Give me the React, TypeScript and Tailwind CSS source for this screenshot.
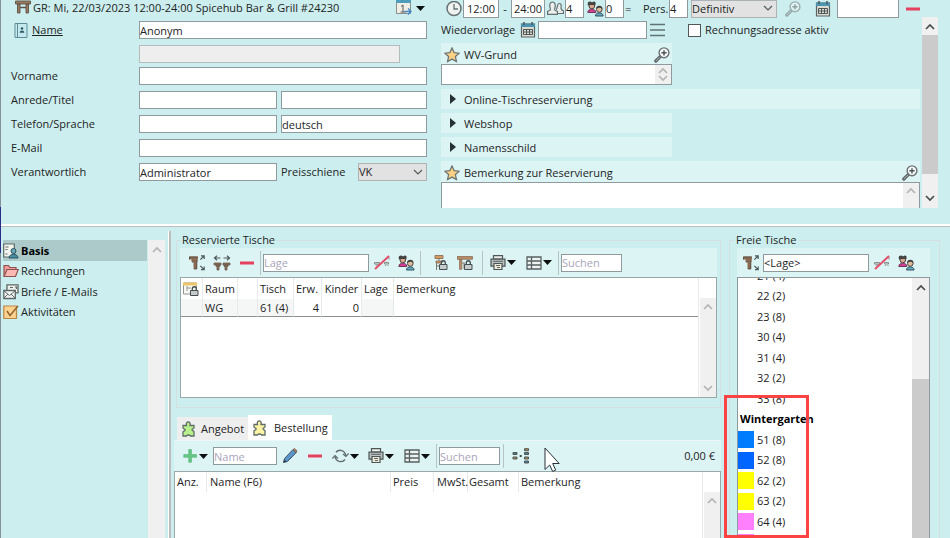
import React from 'react';
import { clsx } from 'clsx';

const field =
  'h-[18px] min-w-0 border border-[#8f9a9e] bg-white text-[11px] leading-4 text-[#1c2424] outline-none placeholder:text-[#a9a5bb]';

type IconProps = { className?: string };

function Svg({ children, className, w = 16, h = 16 }: { children: React.ReactNode; className?: string; w?: number; h?: number }) {
  return (
    <svg width={w} height={h} viewBox={`0 0 ${w} ${h}`} fill="none" className={clsx('shrink-0', className)} aria-hidden="true">
      {children}
    </svg>
  );
}

function Triangle() {
  return (
    <Svg w={9} h={5}>
      <path d="M0 0h9L4.500 5z" fill="#0c0f0f" />
    </Svg>
  );
}

function Chevron({ up = false, color = '#b4b4b4' }: { up?: boolean; color?: string }) {
  return (
    <Svg w={10} h={7}>
      <path d={up ? 'M1 6l4-4 4 4' : 'M1 1l4 4 4-4'} stroke={color} strokeWidth="1.700" />
    </Svg>
  );
}

function TableIcon({ className }: IconProps) {
  return (
    <Svg className={className}>
      <path d="M.5 1h15v3H.5zM2.500 4h2.500v9H2.500zM11 4h2.500v9H11z" fill="#9a7a5c" stroke="#5d5148" strokeWidth=".9" />
      <path d="M5 7.500h6" stroke="#5d5148" strokeWidth="1.500" />
    </Svg>
  );
}

function AddressBook() {
  return (
    <Svg w={14} h={15}>
      <path d="M1 .5h12v14H1z" fill="#c5e8ee" stroke="#5d8e98" />
      <path d="M3.500 1v13" stroke="#5d8e98" />
      <circle cx="8" cy="5.500" r="1.300" fill="#2d5964" />
      <path d="M5.700 9.800c0-3 4.600-3 4.600 0z" fill="#2d5964" />
    </Svg>
  );
}

function CalendarNext() {
  return (
    <Svg>
      <path d="M.5 1h14v12.500H.5z" fill="#f1efe5" stroke="#8b8f8c" />
      <path d="M0 0h15v3H0z" fill="#4f9dbb" />
      <path d="M5 6.500l2-1.500v7M4.500 12h5" stroke="#55595a" />
      <path d="M8.500 11.500h6.500M12 8.500l3 3-3 3" stroke="#4286c6" strokeWidth="1.300" />
    </Svg>
  );
}

function CalendarIcon() {
  return (
    <Svg>
      <path d="M1.500 2h13v13h-13z" fill="#dcdcd3" stroke="#5a6465" strokeWidth="1.200" />
      <path d="M1 1.500h14V5H1z" fill="#4b93b0" />
      <path d="M4 0v3M12 0v3" stroke="#4d5657" strokeWidth="1.500" />
      <path d="M3.500 7.500h9v5h-9zM3.500 10h9M6.500 7.500v5M9.500 7.500v5" stroke="#4d5657" />
    </Svg>
  );
}

function ClockIcon() {
  return (
    <Svg>
      <circle cx="8" cy="7.500" r="7" fill="#eef3f2" stroke="#687174" strokeWidth="1.500" />
      <path d="M8 3v5h4" stroke="#687174" strokeWidth="1.300" />
    </Svg>
  );
}

function PeopleIcon() {
  return (
    <Svg w={17}>
      <path d="M9 8.500c2-1 1-6 3-6s2.500 1.500 2 4c-.3 1.500 0 2.500 2.500 3.500v2.500H11" fill="#e9eeed" stroke="#656e70" strokeWidth="1.200" />
      <path d="M.6 13.400v-3c2.500-1 3.400-1.400 2.600-3C2 4 3 1 5.500 1S9 4 7.800 7.400c-.8 1.600.1 2 2.600 3v3z" fill="#e9eeed" stroke="#656e70" strokeWidth="1.200" />
    </Svg>
  );
}

function KidsIcon() {
  return (
    <Svg w={17}>
      <path d="M1 4.500c-1.500-4 2.500-5 4-3C7.500-.5 9.500 1 8.200 4.500z" fill="#40413f" />
      <circle cx="4.800" cy="5" r="2.800" fill="#dca890" stroke="#4b4543" />
      <path d="M.8 11.500c0-4.500 8-4.500 8 0z" fill="#d63c93" stroke="#6b3a58" />
      <path d="M2 4c1.500-2.500 4.500-2.500 5.800 0z" fill="#40413f" />
      <circle cx="12.300" cy="8.500" r="2.800" fill="#deb99a" stroke="#4b4543" />
      <path d="M8.500 15c0-4.200 7.600-4.200 7.600 0z" fill="#62a9c2" stroke="#34525e" />
      <path d="M9 8c-.3-4.500 6.900-4.500 6.600 0-1.500-1.500-4.500-1.800-6.600 0z" fill="#40413f" />
    </Svg>
  );
}

function ZoomIcon({ className }: IconProps) {
  return (
    <Svg className={className}>
      <path d="M6 9.800L1.800 14" stroke="#5c6466" strokeWidth="3.200" strokeLinecap="round" />
      <path d="M5.500 10.300L2 13.800" stroke="#b3bbbb" strokeWidth="1" strokeLinecap="round" />
      <circle cx="10" cy="5.800" r="4.900" fill="#f4f8f8" stroke="#6a7274" strokeWidth="1.400" />
      <path d="M10 3.200v5.200M7.400 5.800h5.200" stroke="#4c5456" strokeWidth="1.400" />
    </Svg>
  );
}

function StarIcon() {
  return (
    <Svg>
      <path d="M8 1l2.100 4.600 5 .6-3.700 3.400 1 5L8 12.100l-4.400 2.500 1-5L.9 6.200l5-.6z" fill="#fdd183" stroke="#6d7674" strokeWidth="1.300" />
    </Svg>
  );
}

function MinusIcon() {
  return (
    <Svg>
      <path d="M1 6.500h14v3H1z" fill="#e5405d" />
    </Svg>
  );
}

function LinesIcon() {
  return (
    <Svg>
      <path d="M0 2.500h15M0 8h15M0 13.500h15" stroke="#5f7475" strokeWidth="1.300" />
    </Svg>
  );
}

function TableMoveIcon() {
  return (
    <Svg>
      <path d="M0 1.500h9v3H0zM2.500 4.500h6v2.500h-6zM4.500 6h3.500v8H4.500z" fill="#8a6b52" />
      <path d="M.5 4.500V2h8M3 7h2M5 14h2.800V5" stroke="#5b5049" strokeWidth=".9" />
      <path d="M11.300 4.700L15 1M12 .8h3.200V4M11.300 10.800L15 14.500M12 14.700h3.200v-3.200" stroke="#4d595a" strokeWidth="1.200" />
    </Svg>
  );
}

function TableJoinIcon() {
  return (
    <Svg w={18}>
      <path d="M1.500 3h6M4 .8L1.500 3 4 5.200M10.500 3h6M14 .8L16.500 3 14 5.200" stroke="#4d595a" strokeWidth="1.200" />
      <path d="M1 8h7v2H1zM3 10h4v1.500H6V15H4v-3.500H3zM10 8h7v2h-7zM11 10h4v1.500h-1V15h-2v-3.500h-1z" fill="#8a6b52" stroke="#6b5c50" strokeWidth=".8" />
    </Svg>
  );
}

function SlashIcon() {
  return (
    <Svg>
      <path d="M.5 7.500h5v1.500h-5zM1.500 10h3M10.500 7.500h4v1.500h-4zM11 10.500h1M13.500 10.500h1M15 4.500V2" stroke="#80857f" strokeWidth=".9" />
      <path d="M1 14L15 1" stroke="#e34b66" strokeWidth="1.800" />
    </Svg>
  );
}

function Lock() {
  return (
    <>
      <path d="M9.300 9.500V8c0-3 4-3 4 0v1.500" stroke="#454e50" strokeWidth="1.300" />
      <path d="M7.500 9.500h7.500v5H7.500z" fill="#c6cbcb" stroke="#454e50" />
    </>
  );
}

function ChairLockIcon() {
  return (
    <Svg>
      <path d="M3 .5h8v3H3zM4 6h6v2H4z" fill="#d59b62" stroke="#85674b" strokeWidth=".8" />
      <path d="M7 3.500V6M4.500 8v7M4.500 11h3" stroke="#7d756c" />
      <Lock />
    </Svg>
  );
}

function TableLockIcon() {
  return (
    <Svg>
      <path d="M0 1.500h15.500v2.800H0zM2.500 4.300h2.300v10H2.500z" fill="#ba8c66" stroke="#8a705a" strokeWidth=".8" />
      <path d="M5 8h3M7 8v6" stroke="#8a7d70" />
      <Lock />
    </Svg>
  );
}

function PrinterIcon() {
  return (
    <Svg>
      <path d="M3.500 .7h9V4h-9z" fill="#f0f1ec" stroke="#4d5657" strokeWidth="1.200" />
      <path d="M1 4.200h14v7H1z" fill="#b9c0be" stroke="#4d5657" strokeWidth="1.200" />
      <path d="M4 8.500h8V14.500H4z" fill="#f0ecdc" stroke="#4d5657" strokeWidth="1.200" />
      <path d="M3 6.300h10M6 10.500h4M7 12.500h3" stroke="#5d6667" />
    </Svg>
  );
}

function GridIcon() {
  return (
    <Svg>
      <path d="M1 2h14v12H1zM1 6h14M1 10h14M5.500 2v12" fill="#eef2f0" stroke="#566061" strokeWidth="1.300" />
    </Svg>
  );
}

function SheetLockIcon() {
  return (
    <Svg>
      <path d="M.5 2h13v11H.5z" fill="#fafaf5" stroke="#8e9491" />
      <path d="M0 1.500h14V4.500H0z" fill="#ecc469" />
      <path d="M4 5v5M4 7h4" stroke="#8e9491" />
      <Lock />
    </Svg>
  );
}

function PuzzleIcon({ color }: { color: string }) {
  return (
    <Svg>
      <path
        d="M2 4.500h3.500C4 -.3 10.500 -.3 9 4.500h4v2.500c-.5.800-2 .3-2 1.700s1.500 1 2 1.800v4.500H9.500c-.6-.8-.5-1-2-1s-1.500.2-2 1H2v-4c.5-1 2.200-.6 2.200-2S2.500 8 2 7z"
        fill={color}
        stroke="#5f6d68"
        strokeWidth="1.300"
      />
    </Svg>
  );
}

function PlusIcon() {
  return (
    <Svg>
      <path d="M6.700 1.500h2.800v5h5v2.800h-5v5H6.700v-5h-5V6.500h5z" fill="#64c684" stroke="#4da86c" strokeWidth=".5" />
    </Svg>
  );
}

function PencilIcon() {
  return (
    <Svg>
      <path d="M1.500 14.500l1-4 8.500-9 3.300 3-8.800 9z" fill="#5a94c8" stroke="#3f5568" />
      <path d="M11 1.500l1.500-1 2.500 2.300-.9 1.700z" fill="#b78358" stroke="#6a5342" strokeWidth=".7" />
      <path d="M1.500 14.500l1-3 2 2z" fill="#333c41" />
    </Svg>
  );
}

function RefreshIcon() {
  return (
    <Svg w={17}>
      <path d="M4 4.200c3-3.500 9-2 9.700 3.300M13 11.500c-3 3.800-9.300 2.200-9.900-3" stroke="#5d696b" strokeWidth="1.400" />
      <path d="M11 6l2.900 2.500L16.700 5.500M.3 10.500L3 7.500l3 3" stroke="#5d696b" strokeWidth="1.200" />
    </Svg>
  );
}

function SplitIcon() {
  return (
    <Svg w={18}>
      <path d="M1 4.500h4v2H1zM12.500 4.500h4v2h-4zM12.500 13h4v2h-4z" fill="#5a7f8c" stroke="#4b5658" />
      <path d="M1 9h4v2H1zM12.500 .7h4v2h-4zM12.500 9h4v2h-4z" fill="#b98b4c" stroke="#4b5658" />
      <path d="M7.700 7h2v2h-2z" fill="#3c4547" />
    </Svg>
  );
}

function ProfileIcon() {
  return (
    <Svg>
      <path d="M.7 1h10.600v13H.7z" fill="#f3f4ee" stroke="#5e6867" strokeWidth="1.200" />
      <path d="M2.500 4h3M2.500 6.500h2M2.500 11h2" stroke="#5e6867" strokeWidth="1.200" />
      <circle cx="10.500" cy="8" r="2.500" fill="#68a9bd" stroke="#32535f" />
      <path d="M6 15c0-5 9-5 9 0z" fill="#468da3" stroke="#32535f" />
    </Svg>
  );
}

function FolderIcon() {
  return (
    <Svg>
      <path d="M1 13V2.500h4.500l1.500 2h6V7" fill="#f29a97" stroke="#8b5450" strokeWidth="1.200" />
      <path d="M1 13.500L4 6.500h11.300l-2.800 7z" fill="#fcb8b3" stroke="#8b5450" strokeWidth="1.200" />
    </Svg>
  );
}

function LettersIcon() {
  return (
    <Svg>
      <path d="M4 .8h11v8H4z" fill="#eef0ec" stroke="#5d6767" strokeWidth="1.300" />
      <path d="M7 3.500h3M12 3h1.500v2" stroke="#5d6767" strokeWidth="1.200" />
      <path d="M.8 6.500h11.500v8H.8z" fill="#f5f6f3" stroke="#5d6767" strokeWidth="1.300" />
      <path d="M1 7l5.500 4.500L12 7M1 14l4-4M12 14l-4-4" stroke="#5d6767" />
    </Svg>
  );
}

function TaskIcon() {
  return (
    <Svg>
      <path d="M.8 2h12.700v12.500H.8z" fill="#fdd18e" stroke="#ba8645" strokeWidth="1.200" />
      <path d="M4 7l3 4.500L15 2" stroke="#8f6434" strokeWidth="1.500" />
    </Svg>
  );
}

function IconButton({ label, children }: { label: string; children: React.ReactNode }) {
  return (
    <button type="button" aria-label={label} className="flex h-6 w-[25px] shrink-0 items-center justify-center">
      {children}
    </button>
  );
}

function MenuButton({ label, children }: { label: string; children: React.ReactNode }) {
  return (
    <button type="button" aria-label={label} className="flex h-6 w-[36px] shrink-0 items-center justify-center gap-px">
      {children}
      <Triangle />
    </button>
  );
}

function Separator() {
  return <div className="mr-0.5 ml-px h-6 w-px shrink-0 bg-[#b5c4c5]" />;
}

function Select({ label, value, className }: { label: string; value: string; className: string }) {
  return (
    <div className={clsx('relative flex h-[18px] shrink-0 items-center', className)}>
      <select aria-label={label} className="h-full w-full appearance-none border border-[#adb3b4] bg-[#e2e2e2] text-[11px] leading-4 text-[#1c2424]">
        <option>{value}</option>
      </select>
      <div className="pointer-events-none absolute right-1">
        <Svg w={10} h={7}>
          <path d="M1 1l4 4 4-4" stroke="#555b5c" strokeWidth="1.200" />
        </Svg>
      </div>
    </div>
  );
}

function FormRow({ id, label, children }: { id: string; label: React.ReactNode; children: React.ReactNode }) {
  return (
    <div className="flex h-[18px] items-center">
      <label htmlFor={id} className="w-32 shrink-0">
        {label}
      </label>
      <div className="flex flex-1 items-center gap-1">{children}</div>
    </div>
  );
}

function CustomerForm() {
  return (
    <section className="w-[426px] shrink-0 pl-2.5">
      <header className="flex h-4 items-center gap-0.5 pl-1">
        <TableIcon />
        <h1 className="flex-1 whitespace-nowrap">GR: Mi, 22/03/2023 12:00-24:00 Spicehub Bar &amp; Grill #24230</h1>
        <button type="button" aria-label="Datum ändern" className="flex items-center gap-1 pr-0.5">
          <CalendarNext />
          <Triangle />
        </button>
      </header>
      <form className="flex flex-col gap-1 pt-[5px]">
        <div className="flex flex-col gap-1.5">
          <FormRow
            id="name"
            label={
              <span className="flex items-center gap-1 pl-[3px]">
                <AddressBook />
                <span className="underline">Name</span>
              </span>
            }
          >
            <input id="name" defaultValue="Anonym" className={clsx(field, 'flex-1')} />
          </FormRow>
          <FormRow id="zusatz" label="">
            <input id="zusatz" disabled aria-label="Namenszusatz" className="mr-[27px] h-[18px] min-w-0 flex-1 border border-[#b5bcbd] bg-[#eeeeee]" />
          </FormRow>
        </div>
        <div className="flex flex-col gap-1.5">
          <FormRow id="vorname" label="Vorname">
            <input id="vorname" className={clsx(field, 'flex-1')} />
          </FormRow>
          <FormRow id="anrede" label="Anrede/Titel">
            <input id="anrede" className={clsx(field, 'w-[138px]')} />
            <input aria-label="Titel" className={clsx(field, 'flex-1')} />
          </FormRow>
          <FormRow id="telefon" label="Telefon/Sprache">
            <input id="telefon" className={clsx(field, 'w-[138px]')} />
            <input aria-label="Sprache" defaultValue="deutsch" className={clsx(field, 'flex-1')} />
          </FormRow>
          <FormRow id="email" label="E-Mail">
            <input id="email" type="email" className={clsx(field, 'flex-1')} />
          </FormRow>
          <FormRow id="verantwortlich" label="Verantwortlich">
            <input id="verantwortlich" defaultValue="Administrator" className={clsx(field, 'w-[138px]')} />
            <span className="flex-1">Preisschiene</span>
            <Select label="Preisschiene" value="VK" className="w-[69px]" />
          </FormRow>
        </div>
      </form>
    </section>
  );
}

function ScrollBox({ id, cut = false }: { id: string; cut?: boolean }) {
  return (
    <div className={clsx('flex border border-[#8f9a9e] bg-white', cut ? 'h-[26px] border-b-0' : 'h-[21px]')}>
      <textarea id={id} className="min-w-0 flex-1 resize-none overflow-hidden px-px text-[11px] outline-none" />
      <div className={clsx('flex w-4 flex-col items-center justify-between bg-[#f0f0f0]', cut ? 'pt-1' : 'py-0.5')}>
        <Chevron up />
        {!cut && <Chevron />}
      </div>
    </div>
  );
}

function StarBand({ id, label }: { id: string; label: string }) {
  return (
    <div className="flex h-[21px] items-center gap-1 bg-[#dcf4f4] pt-0.5 pr-0.5 pl-[3px]">
      <StarIcon />
      <label htmlFor={id} className="flex-1">
        {label}
      </label>
      <ZoomIcon />
    </div>
  );
}

function Disclosure({ label, wide = false }: { label: string; wide?: boolean }) {
  return (
    <button type="button" className={clsx('flex h-5 items-center gap-2 bg-[#dcf4f4] pt-0.5 pl-[9px] text-left', !wide && 'w-[231px]')}>
      <Svg w={6} h={10} className="mb-0.5">
        <path d="M0 0l6 5-6 5z" fill="#253233" />
      </Svg>
      {label}
    </button>
  );
}

function ReservationPanel() {
  const top = clsx(field, 'border-t-0 text-center');
  return (
    <section className="flex min-w-0 flex-1 flex-col pr-3 pl-3.5">
      <div className="flex h-[17px] shrink-0 items-center gap-px pl-[5px]">
        <ClockIcon />
        <input aria-label="Von" defaultValue="12:00" className={clsx(top, 'w-9')} />
        <span className="w-2.5 text-center">-</span>
        <input aria-label="Bis" defaultValue="24:00" className={clsx(top, 'mr-px w-[34px]')} />
        <PeopleIcon />
        <input aria-label="Erwachsene" defaultValue="4" className={clsx(field, 'mr-0.5 w-[19px] border-t-0')} />
        <KidsIcon />
        <input aria-label="Kinder" defaultValue="0" className={clsx(field, 'w-[19px] border-t-0')} />
        <span className="w-[17px]">=</span>
        <label htmlFor="pers" className="w-[25px]">
          Pers.
        </label>
        <input id="pers" defaultValue="4" className={clsx(field, 'mr-0.5 w-[19px] border-t-0')} />
        <Select label="Status" value="Definitiv" className="w-[86px]" />
        <div className="flex flex-1 items-center gap-1.5 pl-[7px]">
          <ZoomIcon className="mr-2 opacity-50" />
          <CalendarIcon />
          <input aria-label="Optionsdatum" className={clsx(field, 'w-[62px] border-t-0')} />
          <MinusIcon />
        </div>
      </div>
      <div className="flex gap-0.5">
        <div className="flex min-w-0 flex-1 flex-col gap-1 pt-1">
          <div className="flex h-[18px] items-center">
            <label htmlFor="wiedervorlage" className="w-[79px]">
              Wiedervorlage
            </label>
            <CalendarIcon />
            <input id="wiedervorlage" className={clsx(field, 'mr-[3px] ml-0.5 w-[109px]')} />
            <LinesIcon />
            <label className="flex items-center gap-1 pl-[22px]">
              <input type="checkbox" className="size-[13px] appearance-none border border-[#4e5859] bg-white" />
              Rechnungsadresse aktiv
            </label>
          </div>
          <div className="w-[231px]">
            <StarBand id="wvgrund" label="WV-Grund" />
            <ScrollBox id="wvgrund" />
          </div>
          <Disclosure label="Online-Tischreservierung" wide />
          <Disclosure label="Webshop" />
          <Disclosure label="Namensschild" />
          <div>
            <StarBand id="bemerkung" label="Bemerkung zur Reservierung" />
            <ScrollBox id="bemerkung" cut />
          </div>
        </div>
        <div className="flex w-4 flex-col items-center bg-[#f0f0f0]">
          <div className="flex h-[18px] items-center">
            <Chevron up color="#474d4e" />
          </div>
          <div className="w-full flex-1 bg-[#cbcbcb]" />
          <div className="flex h-[34px] items-end pb-1.5">
            <Chevron color="#474d4e" />
          </div>
        </div>
      </div>
    </section>
  );
}

const navItems = [
  { label: 'Basis', icon: <ProfileIcon />, active: true },
  { label: 'Rechnungen', icon: <FolderIcon />, active: false },
  { label: 'Briefe / E-Mails', icon: <LettersIcon />, active: false },
  { label: 'Aktivitäten', icon: <TaskIcon />, active: false },
];

function Sidebar() {
  return (
    <nav className="flex w-[164px] shrink-0 pt-[13px] pl-0.5">
      <ul className="flex-1">
        {navItems.map((item) => (
          <li key={item.label} className="h-[21px] even:h-5">
            <button
              type="button"
              className={clsx('flex h-full w-full items-center gap-0.5 text-left', item.active && 'bg-[#adcaca] font-bold text-black')}
            >
              {item.icon}
              {item.label}
            </button>
          </li>
        ))}
      </ul>
      <div className="ml-px flex w-[17px] justify-center bg-[#f0f0f0] pt-1.5">
        <Chevron up />
      </div>
    </nav>
  );
}

const group = 'min-w-0 border border-[#d3dfe0] px-[3px]';
const strip = 'flex items-center bg-[#dcf4f4]';

function ReservedTables() {
  const head = 'h-[21px] border-r border-[#e6eaea] px-0.5 text-left font-normal';
  const cell = 'h-[18px] border-r border-b border-r-[#e6eaea] border-b-[#8b8f90] px-0.5';
  return (
    <fieldset className={clsx(group, 'pb-[9px]')}>
      <legend className="ml-px h-4 px-px leading-4">Reservierte Tische</legend>
      <div className={clsx(strip, 'h-[29px] pl-1')}>
        <IconButton label="Tisch verschieben"><TableMoveIcon /></IconButton>
        <IconButton label="Tische verbinden"><TableJoinIcon /></IconButton>
        <IconButton label="Tisch entfernen"><MinusIcon /></IconButton>
        <Separator />
        <input aria-label="Lage" placeholder="Lage" className={clsx(field, 'w-[106px]')} />
        <IconButton label="Lage löschen"><SlashIcon /></IconButton>
        <IconButton label="Personen"><KidsIcon /></IconButton>
        <Separator />
        <div className="flex px-1">
          <IconButton label="Platz sperren"><ChairLockIcon /></IconButton>
          <IconButton label="Tisch sperren"><TableLockIcon /></IconButton>
        </div>
        <Separator />
        <MenuButton label="Drucken"><PrinterIcon /></MenuButton>
        <MenuButton label="Ansicht"><GridIcon /></MenuButton>
        <Separator />
        <input aria-label="Tische suchen" placeholder="Suchen" className={clsx(field, 'w-[61px]')} />
      </div>
      <div className="flex h-[121px] border border-[#9aa8aa] bg-white">
        <div className="min-w-0 flex-1 border-r border-[#e6eaea]">
          <table className="w-full table-fixed border-separate border-spacing-0">
            <colgroup>
              <col className="w-[22px]" />
              <col className="w-[35px]" />
              <col className="w-5" />
              <col className="w-9" />
              <col className="w-7" />
              <col className="w-10" />
              <col className="w-8" />
              <col />
            </colgroup>
            <thead>
              <tr>
                <th className={head} aria-label="Gesperrt"><SheetLockIcon /></th>
                <th className={head}>Raum</th>
                <th className={head} aria-label="Status" />
                <th className={head}>Tisch</th>
                <th className={head}>Erw.</th>
                <th className="h-[21px] border-r border-[#e6eaea] text-center font-normal">Kinder</th>
                <th className={head}>Lage</th>
                <th className="h-[21px] px-0.5 text-left font-normal">Bemerkung</th>
              </tr>
            </thead>
            <tbody>
              <tr>
                <td className={clsx(cell, 'bg-[#f5f7f7]')} />
                <td className={clsx(cell, 'bg-[#f5f7f7]')}>WG</td>
                <td className={clsx(cell, 'bg-[#f5f7f7]')} />
                <td className={clsx(cell, 'bg-[#f5f7f7] whitespace-nowrap')}>61 (4)</td>
                <td className={clsx(cell, 'text-right')}>4</td>
                <td className={clsx(cell, 'text-right')}>0</td>
                <td className={clsx(cell, 'bg-[#f5f7f7]')} />
                <td className="h-[18px] border-b border-[#8b8f90]" />
              </tr>
            </tbody>
          </table>
        </div>
        <div className="flex w-[17px] flex-col pt-5">
          <div className="ml-px flex flex-1 flex-col items-center justify-between bg-[#f0f0f0] py-[5px]">
            <Chevron up />
            <Chevron />
          </div>
        </div>
      </div>
    </fieldset>
  );
}

function OrderPanel() {
  const head = 'h-5 border-r border-[#e6eaea] px-[3px] text-left font-normal whitespace-nowrap';
  return (
    <section className="-ml-0.5 flex min-h-0 flex-1 flex-col pt-[7px]">
      <div role="tablist" className="flex items-end pl-[3px]">
        <button type="button" role="tab" aria-selected="false" className="flex h-[23px] w-[71px] items-center gap-1 bg-[#eeeeee] pl-1">
          <PuzzleIcon color="#b7f08c" />
          Angebot
        </button>
        <button type="button" role="tab" aria-selected="true" className="flex h-[25px] w-[84px] items-center gap-1.5 bg-white pl-1">
          <PuzzleIcon color="#fdf3a4" />
          Bestellung
        </button>
      </div>
      <div className={clsx(strip, 'h-[31px] shrink-0 border-t border-[#eef7f7] pr-1.5 pl-[3px]')}>
        <MenuButton label="Artikel hinzufügen"><PlusIcon /></MenuButton>
        <input aria-label="Artikelname" placeholder="Name" className={clsx(field, 'w-16')} />
        <IconButton label="Bearbeiten"><PencilIcon /></IconButton>
        <IconButton label="Löschen"><MinusIcon /></IconButton>
        <MenuButton label="Aktualisieren"><RefreshIcon /></MenuButton>
        <MenuButton label="Bestellung drucken"><PrinterIcon /></MenuButton>
        <MenuButton label="Bestellansicht"><GridIcon /></MenuButton>
        <Separator />
        <input aria-label="Bestellung suchen" placeholder="Suchen" className={clsx(field, 'mr-0.5 w-[61px]')} />
        <Separator />
        <div className="flex-1 pl-0.5">
          <IconButton label="Aufteilen"><SplitIcon /></IconButton>
        </div>
        <output>0,00 €</output>
      </div>
      <div className="flex min-h-0 flex-1 border border-b-0 border-[#9aa8aa] bg-white">
        <div className="min-w-0 flex-1 border-r border-[#e6eaea]">
          <table className="w-full table-fixed border-separate border-spacing-0">
            <colgroup>
              <col className="w-8" />
              <col className="w-[184px]" />
              <col className="w-[43px]" />
              <col className="w-[34px]" />
              <col className="w-[51px]" />
              <col />
            </colgroup>
            <thead>
              <tr>
                <th className="h-5 border-r border-[#e6eaea] px-0.5 text-left font-normal">Anz.</th>
                <th className={head}>Name (F6)</th>
                <th className="h-5 border-r border-[#e6eaea] px-0.5 text-left font-normal">Preis</th>
                <th className={head}>MwSt.</th>
                <th className="h-5 border-r border-[#e6eaea] px-px text-left font-normal">Gesamt</th>
                <th className="h-5 px-0.5 text-left font-normal">Bemerkung</th>
              </tr>
            </thead>
          </table>
        </div>
        <div className="flex w-[17px] flex-col pt-5">
          <div className="ml-px flex flex-1 justify-center bg-[#f0f0f0] pt-[5px]">
            <Chevron up />
          </div>
        </div>
      </div>
    </section>
  );
}

const freeTables: { label: string; swatch?: string; room?: boolean }[] = [
  { label: '21 (4)' },
  { label: '22 (2)' },
  { label: '23 (8)' },
  { label: '30 (4)' },
  { label: '31 (4)' },
  { label: '32 (2)' },
  { label: '33 (8)' },
  { label: 'Wintergarten', room: true },
  { label: '51 (8)', swatch: 'bg-[#007cff]' },
  { label: '52 (8)', swatch: 'bg-[#0066ff]' },
  { label: '62 (2)', swatch: 'bg-[#ffff00]' },
  { label: '63 (2)', swatch: 'bg-[#ffff00]' },
  { label: '64 (4)', swatch: 'bg-[#ff80ff]' },
  { label: '', swatch: 'bg-[#ff80ff]' },
];

function FreeTables() {
  return (
    <div className="relative flex w-[211px] shrink-0">
      <fieldset className="min-w-0 flex-1 border border-b-0 border-[#d3dfe0] pr-[9px] pl-[7px]">
        <legend className="-ml-1 h-4 px-[3px] leading-4">Freie Tische</legend>
        <div className={clsx(strip, 'h-[29px] pl-px')}>
          <IconButton label="Tisch zuweisen"><TableMoveIcon /></IconButton>
          <input aria-label="Lage der freien Tische" defaultValue="<Lage>" className={clsx(field, 'w-[106px]')} />
          <IconButton label="Lage zurücksetzen"><SlashIcon /></IconButton>
          <IconButton label="Freie Plätze"><KidsIcon /></IconButton>
        </div>
        <div className="flex h-[262px] overflow-hidden border border-b-0 border-[#8f9a9e] bg-white">
          <ul className="-mt-[13px] flex-1">
            {freeTables.map((t, i) => (
              <li key={i} className="flex h-[21px] items-center even:h-5">
                {t.room ? (
                  <span className="pl-0.5 font-bold text-black">{t.label}</span>
                ) : (
                  <>
                    <span className={clsx('mr-[3px] h-[17px] w-4', t.swatch)} />
                    {t.label}
                  </>
                )}
              </li>
            ))}
          </ul>
          <div className="flex w-[17px] flex-col items-center bg-[#f0f0f0] pt-1.5">
            <Chevron up color="#474d4e" />
            <div className="mt-[88px] w-full flex-1 bg-[#cbcbcb]" />
          </div>
        </div>
      </fieldset>
      <div className="pointer-events-none absolute top-[163px] -left-[5px] h-[143px] w-[85px] border-[3px] border-[#fb4343]" />
    </div>
  );
}

export default function App() {
  return (
    <main className="relative flex h-screen w-full overflow-hidden bg-[#cdeeee] font-['Open_Sans','Noto_Sans',sans-serif] text-[11px] leading-4 text-[#1c2424]">
      <div className="flex w-px shrink-0 flex-col bg-[#86929a]">
        <div className="mt-[207px] h-[46px] bg-[#2b2b8c]" />
      </div>
      <div className="flex min-w-0 flex-1 flex-col">
        <div className="flex shrink-0 pb-4">
          <CustomerForm />
          <ReservationPanel />
        </div>
        <div className="h-[3px] shrink-0 border-t-2 border-b border-t-white border-b-[#bdbdbd]" />
        <div className="flex min-h-0 flex-1">
          <Sidebar />
          <div className="mt-1 ml-[3px] w-[3px] shrink-0 border-r-2 border-l border-r-[#bdbdbd] border-l-white" />
          <div className="flex min-w-0 flex-1 gap-2 pt-[5px] pr-[10px] pl-[5px]">
            <div className="flex min-w-0 flex-1 flex-col">
              <ReservedTables />
              <OrderPanel />
            </div>
            <FreeTables />
          </div>
        </div>
      </div>
      <svg width="16" height="26" viewBox="0 0 16 26" className="pointer-events-none absolute top-[447px] left-[544px]" aria-hidden="true">
        <path d="M1 1v21.500l4.700-4.500 3 6.500 3-1.500-3-6.500h6.500z" fill="white" stroke="#263238" />
      </svg>
    </main>
  );
}
